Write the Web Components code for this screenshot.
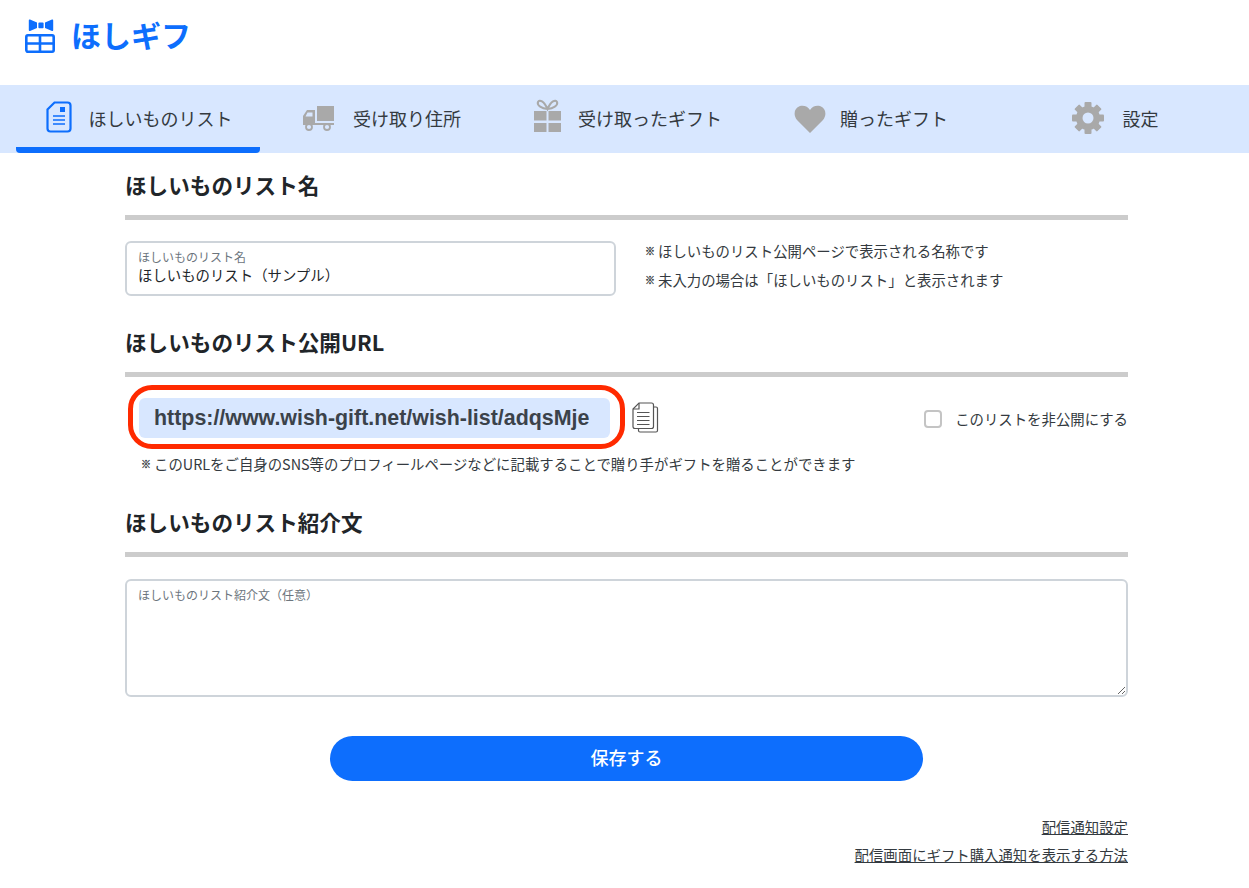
<!DOCTYPE html>
<html lang="ja">
<head>
<meta charset="utf-8">
<title>ほしギフ</title>
<style>
  html, body { margin: 0; padding: 0; background: #fff; }
  body { font-family: "Noto Sans CJK JP", "Liberation Sans", sans-serif; color: #212529; }
</style>
</head>
<body>
<hg-app></hg-app>

<script>
const JP = `"Noto Sans CJK JP", "Liberation Sans", sans-serif`;

class HgLogo extends HTMLElement {
  constructor() {
    super();
    this.attachShadow({ mode: "open" });
    this.shadowRoot.innerHTML = `
      <style>
        :host { display: flex; align-items: flex-start; height: 85px; padding: 18px 0 0 24px; box-sizing: border-box; color: #0d6efd; }
        .box { display: flex; align-items: center; gap: 16px; }
        svg { display: block; }
        span { font: 700 30px/40px ${JP}; margin: -4px 0 0 -1px; }
      </style>
      <div class="box">
        <svg width="32" height="35" viewBox="0 0 32 35">
          <path d="M6 .6 L13 3.5 V9 L6 12 Q4.8 12.4 4.8 11 V1.6 Q4.8 .2 6 .6 Z M28 .6 L21 3.5 V9 L28 12 Q29.2 12.4 29.2 11 V1.6 Q29.2 .2 28 .6 Z" fill="#0d6efd"/>
          <rect x="14.4" y="3.6" width="5.2" height="5.6" rx="1" fill="#0d6efd"/>
          <rect x="2.3" y="16.3" width="27.4" height="16.4" rx="1.6" fill="none" stroke="#0d6efd" stroke-width="2.6"/>
          <path d="M2 24.5 H30 M16 16 V33" stroke="#0d6efd" stroke-width="2.6" fill="none"/>
        </svg>
        <span>ほしギフ</span>
      </div>`;
  }
}
customElements.define("hg-logo", HgLogo);

class HgTab extends HTMLElement {
  constructor() {
    super();
    this.attachShadow({ mode: "open" });
    this.shadowRoot.innerHTML = `
      <style>
        :host { display: flex; align-items: center; justify-content: center; box-sizing: border-box; height: 68px; gap: var(--tab-gap, 16px); padding: 0 0 2px var(--tab-shift, 0); color: #343a40; font: 400 18px/24px ${JP}; }
        :host([active]) { border-bottom: 6px solid #0d6efd; border-radius: 0 0 4px 4px; padding: 4px 0 0 var(--tab-shift, 0); }
        .icon { display: flex; margin-top: var(--icon-top, 0); }
      </style>
      <div class="icon"><slot name="icon"></slot></div>
      <div><slot></slot></div>`;
  }
}
customElements.define("hg-tab", HgTab);

class HgNav extends HTMLElement {
  constructor() {
    super();
    this.attachShadow({ mode: "open" });
    this.shadowRoot.innerHTML = `
      <style>
        :host { display: grid; grid-template-columns: 244px 243px 244px 244px 244px; padding: 0 14px 0 16px; background: #d8e7ff; height: 68px; }
      </style>
      <slot></slot>`;
  }
}
customElements.define("hg-nav", HgNav);

class HgSection extends HTMLElement {
  constructor() {
    super();
    this.attachShadow({ mode: "open" });
    this.shadowRoot.innerHTML = `
      <style>
        :host { display: block; }
        h2 { margin: 0; font: 700 21.6px/28px ${JP}; color: #212529; height: 28px; transform: translateY(-2px); }
        .rule { height: 5px; background: #cccccc; margin-top: 14px; }
        .body { padding-top: var(--body-top, 22px); }
      </style>
      <h2><slot name="title"></slot></h2>
      <div class="rule"></div>
      <div class="body"><slot></slot></div>`;
  }
}
customElements.define("hg-section", HgSection);

class HgField extends HTMLElement {
  constructor() {
    super();
    this.attachShadow({ mode: "open" });
    const multi = this.hasAttribute("multiline");
    const control = multi
      ? `<textarea readonly></textarea>`
      : `<input readonly value="${this.getAttribute("value") || ""}">`;
    this.shadowRoot.innerHTML = `
      <style>
        :host { display: block; position: relative; }
        label { position: absolute; left: 13px; top: 8px; font: 400 12px/15px ${JP}; color: #6c757d; }
        input, textarea { display: block; box-sizing: border-box; width: 100%; border: 2px solid #ced4da; border-radius: 6px; background: #fff; color: #212529; font: 400 14.4px/20px ${JP}; outline: none; margin: 0; }
        input { height: 55px; padding: 15px 11px 4px; }
        textarea { height: 118px; padding: 24px 11px 4px; resize: vertical; }
      </style>
      <label>${this.getAttribute("label") || ""}</label>
      ${control}`;
  }
}
customElements.define("hg-field", HgField);

class HgNote extends HTMLElement {
  constructor() {
    super();
    this.attachShadow({ mode: "open" });
    this.shadowRoot.innerHTML = `
      <style>
        :host { display: flex; align-items: center; gap: 3px; font: 400 14.4px/19px ${JP}; color: #343a40; white-space: nowrap; }
        i { font-style: normal; font-size: 10px; font-weight: 700; -webkit-text-stroke: .35px #343a40; }
      </style>
      <i>※</i><span><slot></slot></span>`;
  }
}
customElements.define("hg-note", HgNote);

class HgUrl extends HTMLElement {
  constructor() {
    super();
    this.attachShadow({ mode: "open" });
    this.shadowRoot.innerHTML = `
      <style>
        :host { display: flex; align-items: center; width: 1003px; }
        .ring { box-sizing: border-box; width: 497px; height: 64px; margin-left: 3px; border: 5px solid #ff2a00; border-radius: 24px; padding: 8px 10px 0 6px; flex: none; }
        .pill { height: 40px; border-radius: 6px; background: #d8e7ff; padding-left: 15px; font: 700 21.4px/40px "Liberation Sans", Arial, sans-serif; color: #3b424a; white-space: nowrap; }
        svg { display: block; margin-left: 7px; flex: none; }
        .check { margin: 3px 0 0 auto; display: flex; align-items: center; gap: 13px; font: 400 14.4px/20px ${JP}; color: #343a40; }
        .box { width: 18px; height: 18px; box-sizing: border-box; border: 2px solid #c4c4c4; border-radius: 4px; background: #fff; }
      </style>
      <div class="ring"><div class="pill"><slot></slot></div></div>
      <svg width="27" height="31" viewBox="0 0 27 31" fill="none" stroke="#555" stroke-width="1.2">
        <path d="M21.5 5 H24 Q25.5 5 25.5 6.5 V28.5 Q25.5 30 24 30 H8 Q6.5 30 6.5 28.5 V26"/>
        <path d="M7 1 H19.5 Q21.5 1 21.5 3 V24.5 Q21.5 26.5 19.5 26.5 H3 Q1 26.5 1 24.5 V7 Z" fill="#fff"/>
        <path d="M7 1 V7 H1"/>
        <path d="M5 10.5 H17.5 M5 14.5 H17.5 M5 18.5 H17.5 M5 22.5 H17.5" stroke-width="1"/>
      </svg>
      <div class="check"><div class="box"></div><span><slot name="check"></slot></span></div>`;
  }
}
customElements.define("hg-url", HgUrl);

class HgApp extends HTMLElement {
  constructor() {
    super();
    this.attachShadow({ mode: "open" });
    this.shadowRoot.innerHTML = `
      <style>
        :host { display: block; width: 1249px; height: 888px; overflow: hidden; background: #fff; }
        main { width: 1003px; margin-left: 125px; padding-top: 20px; }
        .row { display: flex; gap: 29px; }
        .row hg-field { width: 491px; flex: none; }
        .notes { display: flex; flex-direction: column; gap: 10px; }
        .sec2 { margin-top: 34px; }
        .sec3 { margin-top: 37px; }
        .urlnote { margin: 5px 0 0 16px; }
        button { display: block; width: 593px; height: 45px; margin: 39px auto 0; border: 0; border-radius: 23px; background: #0d6efd; color: #fff; font: 500 18px/24px ${JP}; padding: 0 0 4px; }
        .links { display: flex; flex-direction: column; align-items: flex-end; gap: 8px; margin-top: 36px; }
        a { font: 400 14.4px/20px ${JP}; color: #343a40; text-decoration: underline; }
      </style>
      <hg-logo></hg-logo>
      <hg-nav>
        <hg-tab active style="--tab-gap:17px;--tab-shift:2px;--icon-top:-2px">
          <svg slot="icon" width="26" height="32" viewBox="0 0 26 32" fill="none">
            <path d="M8.5 1.5 H21.5 Q24.5 1.5 24.5 4.5 V27.5 Q24.5 30.5 21.5 30.5 H4.5 Q1.5 30.5 1.5 27.5 V8.5 Z" stroke="#0d6efd" stroke-width="2.2"/>
            <rect x="14" y="6" width="5" height="5" fill="#0d6efd"/>
            <path d="M7 15 H19 M7 19 H19 M7 23 H19" stroke="#0d6efd" stroke-width="1.6"/>
          </svg>
          ほしいものリスト
        </hg-tab>
        <hg-tab style="--tab-gap:18px">
          <svg slot="icon" width="33" height="26" viewBox="0 0 33 26" fill="#a9a9a9">
            <rect x="15" y="1" width="17" height="15"/>
            <path fill-rule="evenodd" d="M1 11 L5 5 H13 V20 H1 Z M5.5 7.5 H10.5 V11.5 H3.5 Z"/>
            <rect x="12" y="18" width="20" height="2"/>
            <circle cx="7" cy="22" r="3" fill="#d8e7ff" stroke="#a9a9a9" stroke-width="1.8"/>
            <circle cx="25" cy="22" r="3" fill="#d8e7ff" stroke="#a9a9a9" stroke-width="1.8"/>
          </svg>
          受け取り住所
        </hg-tab>
        <hg-tab style="--tab-gap:17px;--tab-shift:6px;--icon-top:-6px">
          <svg slot="icon" width="27" height="33" viewBox="0 0 27 33" fill="#a9a9a9">
            <path d="M13.5 10 C10 2 5.5 0 4 3 C2.5 6.5 8 9.5 13.5 10 C19 9.5 24.5 6.5 23 3 C21.5 0 17 2 13.5 10 Z" fill="none" stroke="#a9a9a9" stroke-width="2"/>
            <rect x="0" y="12" width="12.5" height="9.5"/>
            <rect x="14.5" y="12" width="12.5" height="9.5"/>
            <rect x="0" y="24" width="12.5" height="9"/>
            <rect x="14.5" y="24" width="12.5" height="9"/>
          </svg>
          受け取ったギフト
        </hg-tab>
        <hg-tab style="--tab-gap:14px;--tab-shift:4px;--icon-top:2px">
          <svg slot="icon" width="32" height="28" viewBox="0 0 32 28" fill="#a9a9a9">
            <path d="M16 28 L3 15 C-1 10 0 3 6 1 C10 0 14 1.5 16 5 C18 1.5 22 0 26 1 C32 3 33 10 29 15 Z"/>
          </svg>
          贈ったギフト
        </hg-tab>
        <hg-tab style="--tab-gap:19px;--tab-shift:4px">
          <svg slot="icon" width="32" height="32" viewBox="0 0 32 32">
            <g fill="#a9a9a9">
              <circle cx="16" cy="16" r="12"/>
              <rect x="12.5" y="0" width="7" height="32" rx="1"/>
              <rect x="12.5" y="0" width="7" height="32" rx="1" transform="rotate(45 16 16)"/>
              <rect x="12.5" y="0" width="7" height="32" rx="1" transform="rotate(90 16 16)"/>
              <rect x="12.5" y="0" width="7" height="32" rx="1" transform="rotate(135 16 16)"/>
            </g>
            <circle cx="16" cy="16" r="5.5" fill="#d8e7ff"/>
          </svg>
          設定
        </hg-tab>
      </hg-nav>
      <main>
        <hg-section style="--body-top:21px">
          <span slot="title">ほしいものリスト名</span>
          <div class="row">
            <hg-field label="ほしいものリスト名" value="ほしいものリスト（サンプル）"></hg-field>
            <div class="notes">
              <hg-note>ほしいものリスト公開ページで表示される名称です</hg-note>
              <hg-note>未入力の場合は「ほしいものリスト」と表示されます</hg-note>
            </div>
          </div>
        </hg-section>
        <hg-section class="sec2" style="--body-top:8px">
          <span slot="title">ほしいものリスト公開URL</span>
          <hg-url>https://www.wish-gift.net/wish-list/adqsMje<span slot="check">このリストを非公開にする</span></hg-url>
          <hg-note class="urlnote">このURLをご自身のSNS等のプロフィールページなどに記載することで贈り手がギフトを贈ることができます</hg-note>
        </hg-section>
        <hg-section class="sec3">
          <span slot="title">ほしいものリスト紹介文</span>
          <hg-field multiline label="ほしいものリスト紹介文（任意）"></hg-field>
        </hg-section>
        <button type="button">保存する</button>
        <div class="links">
          <a href="#">配信通知設定</a>
          <a href="#">配信画面にギフト購入通知を表示する方法</a>
        </div>
      </main>`;
  }
}
customElements.define("hg-app", HgApp);
</script>
</body>
</html>
